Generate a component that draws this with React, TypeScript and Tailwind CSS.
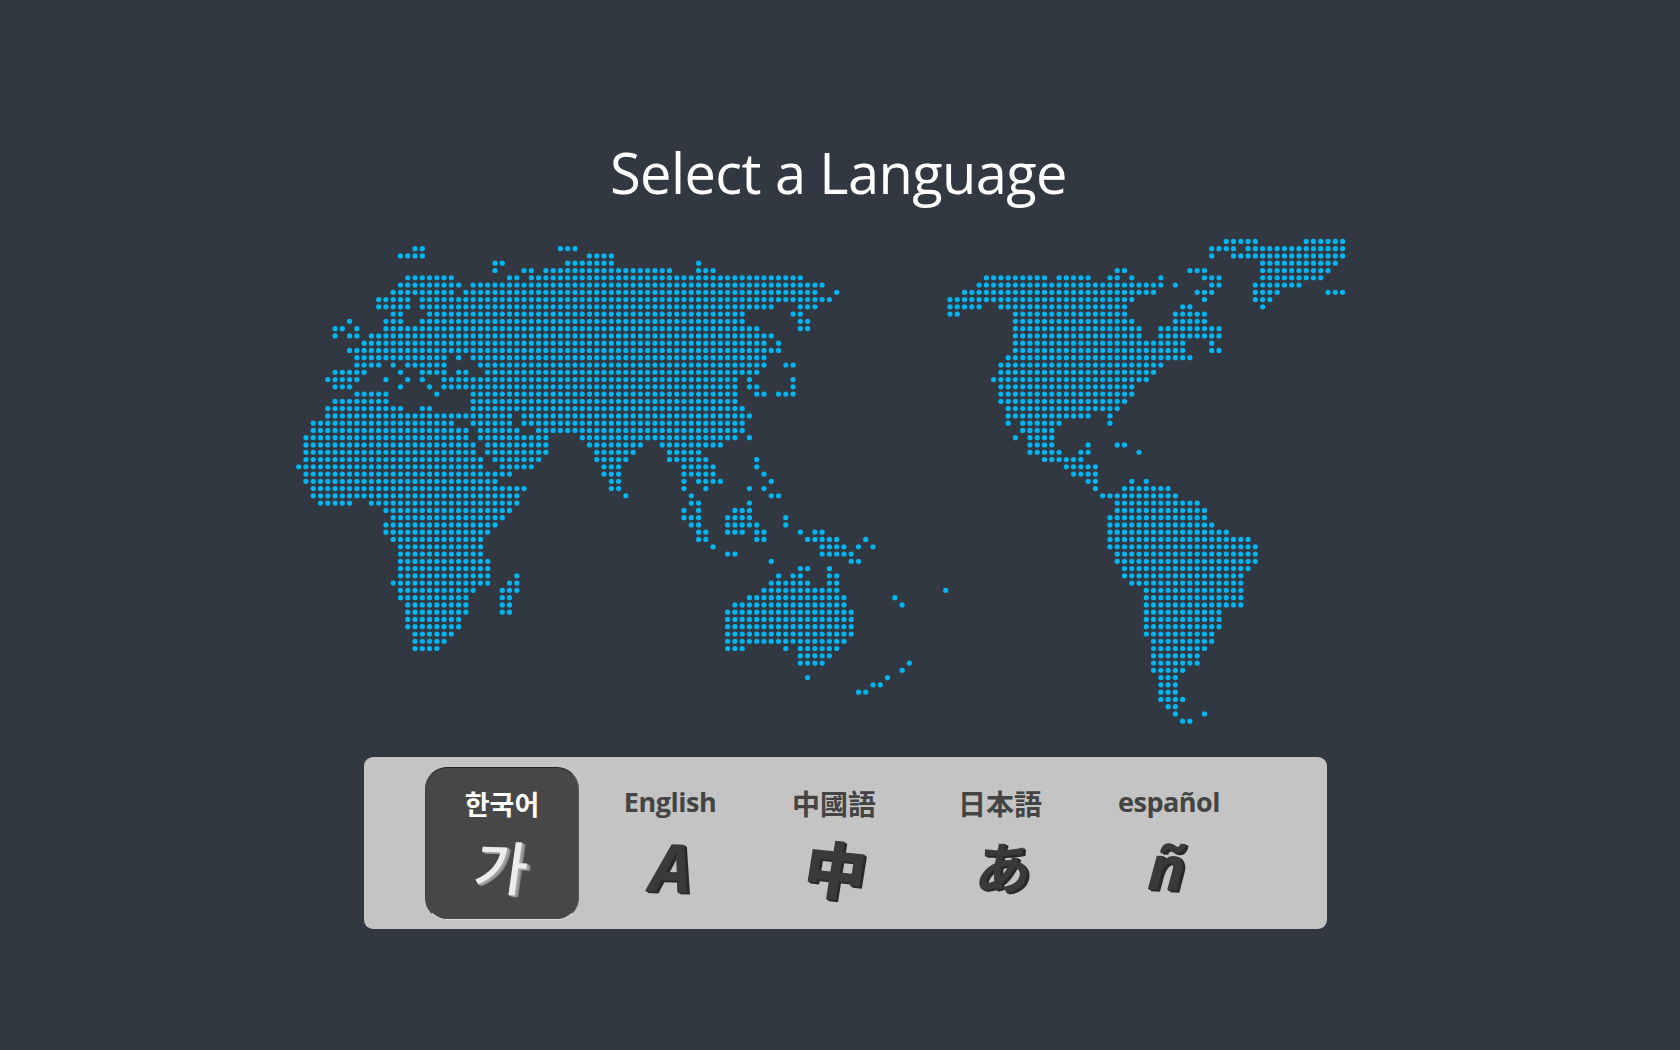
const oldWorld = [
  '',
  '16-17 36-38',
  '14-17 40-43',
  '27-28 37-43 55',
  '27 31-32 34-51 55-57',
  '15-21 29-30 32-69',
  '14-22 24-72',
  '13-21 23-71 74',
  '11-15 17-73',
  '11-15 17-65 69-71',
  '13-14 18-61 68-69',
  '7 12-14 17-61 69-70',
  '5-6 8 12-63 69-70',
  '5 7-8 10-65',
  '9-64 66',
  '7-66',
  '8-20 22 24-64',
  '8-11 13 15-20 25-64 67-68',
  '5-9 14 17-20 22-23 26-63',
  '4-8 12 15 17 20-60 62 68',
  '5-7 14 18 20-60 62-63 68',
  '8-12 19 24-60 63-64 66-68',
  '5-12 24-60',
  '4-14 17-18 24-61',
  '4-29 31-62',
  '2-21 24-29 31-61',
  '2-23 25-30 33-61',
  '1-23 25-34 39-60 62',
  '1-24 26-34 40-47 50-58',
  '1-24 26-34 41-46 51-55',
  '1-25 27-33 41-45 51-56 63',
  '0-25 28-32 42-44 53-57 63',
  '1-29 42-44 53-57 64',
  '1-27 43-44 53 55-58 65',
  '2-31 43-44 53 56 62 64',
  '2-30 45 54 65-66',
  '3-7 10-30 54-55 62',
  '12-29 53 55 60-62',
  '13-28 53-55 59-62 67',
  '12-27 54-55 59-63 67',
  '12-26 55-56 59-61 63-64 69 71-72',
  '13-25 55-56 63-64 70-74 78',
  '14-25 57 72-75 77 79',
  '14-25 59-60 72-76',
  '14-26 65 76-77',
  '14-26 69-70 73',
  '14-26 30 66 68-69 73-74',
  '13-26 29-30 65-70 73-74',
  '14-24 28-30 64-74 89',
  '14-23 28-29 62-75 82',
  '15-23 28-29 60-75 83',
  '15-23 28-29 59-76',
  '15-22 59-76',
  '15-22 59-76',
  '16-21 59-76',
  '16-20 59-75',
  '16-19 59-61 67 69-74',
  '69-73',
  '69-72 84',
  '83',
  '70 81',
  '79-80',
  '77-78',
];

const newWorld = [
  '38-42 49-54',
  '36-39 41-54',
  '36 39-54',
  '43-53',
  '23-24 33-35 43-52',
  '5-13 15-19 22-23 25 29 35-37 43-51',
  '4-29 31 36-37 42-48',
  '2-28 34-36 42-45 52-54',
  '0-25 35 42-44',
  '0-4 7-24 32-33 43',
  '0-1 9-24 31-35',
  '9-25 31-35',
  '9-26 29-37',
  '9-26 29-37',
  '9-32 36',
  '9-32 36-37',
  '8-33',
  '7-29',
  '7-28',
  '6-27',
  '7-25',
  '7-25',
  '7-24',
  '8-23',
  '8-19 22',
  '8 10-15 22',
  '10-14',
  '9 11-14',
  '11-14 19 23-24',
  '11-15 18-19 26',
  '13-18',
  '16-20',
  '17-20',
  '19-20 25 27',
  '20 24-30',
  '21-31',
  '23-34',
  '23-35',
  '22-35',
  '22-36',
  '22-38',
  '22-41',
  '22-42',
  '23-42',
  '23-42',
  '24-41',
  '24-40',
  '25-40',
  '27-40',
  '27-40',
  '27-40',
  '27-37',
  '27-37',
  '27-37',
  '27-36',
  '28-36',
  '28-35',
  '28-34',
  '28-34',
  '28-32',
  '29-31',
  '29-31',
  '29-31',
  '29-32',
  '30-31',
  '31 35',
  '32-33',
];

const PITCH = 7.27;
const ROW_START = 241.4;

const toDots = (rows: string[], startX: number) => {
  const dots: { x: number; y: number }[] = [];
  rows.forEach((row, r) => {
    row.split(' ').filter(Boolean).forEach((part) => {
      const [from, to] = part.split('-').map(Number);
      for (let c = from; c <= (to ?? from); c++) {
        dots.push({ x: startX + c * PITCH, y: ROW_START + r * PITCH });
      }
    });
  });
  return dots;
};

const dots = [...toDots(oldWorld, 298.7), ...toDots(newWorld, 950)];

const languages = [
  {
    label: '한국어',
    labelClass: "text-[27px] font-bold [font-family:'Noto_Sans_CJK_KR',sans-serif] translate-y-[2px]",
    glyph: '가',
    glyphClass:
      "text-[58px] font-medium text-[#ececec] [font-family:'Noto_Sans_CJK_KR',sans-serif] [text-shadow:1px_1px_0_#a8a8a8,2px_1px_0_#a0a0a0,3px_2px_0_#909090,4px_2px_0_#808080] -skew-x-6 rotate-2 translate-y-[1px]",
  },
  {
    label: 'English',
    labelClass: "text-[27px] font-bold [font-family:'Open_Sans',sans-serif] tracking-[-0.5px] translate-x-[2px] translate-y-[1px]",
    glyph: 'A',
    glyphClass:
      "text-[67px] font-bold italic text-[#3a3a3a] [font-family:'Open_Sans',sans-serif] [text-shadow:1px_1px_0_#2a2a2a,2px_1px_0_#2a2a2a,3px_2px_0_#2a2a2a] rotate-2 translate-x-[3px] translate-y-[3px]",
  },
  {
    label: '中國語',
    labelClass: "text-[28px] font-bold [font-family:'Noto_Sans_CJK_TC',sans-serif] translate-y-[2px]",
    glyph: '中',
    glyphClass:
      "text-[62px] font-black text-[#3a3a3a] [font-family:'Noto_Sans_CJK_TC',sans-serif] [text-shadow:1px_1px_0_#2a2a2a,2px_1px_0_#2a2a2a,3px_2px_0_#2a2a2a] rotate-6 -skew-x-3 translate-x-[2px] translate-y-[4px]",
  },
  {
    label: '日本語',
    labelClass: "text-[28px] font-bold [font-family:'Noto_Sans_CJK_JP',sans-serif] translate-y-[2px]",
    glyph: 'あ',
    glyphClass:
      "text-[56px] font-bold text-[#3a3a3a] [font-family:'Noto_Sans_CJK_JP',sans-serif] [text-shadow:1px_1px_0_#2a2a2a,2px_1px_0_#2a2a2a,3px_2px_0_#2a2a2a] -skew-x-6 translate-x-[4px] translate-y-[2px]",
  },
  {
    label: 'español',
    labelClass: "text-[27px] font-bold [font-family:'Open_Sans',sans-serif] tracking-[-0.5px] translate-x-[3px] translate-y-[1px]",
    glyph: 'ñ',
    glyphClass:
      "text-[62px] font-bold italic text-[#3a3a3a] [font-family:'Open_Sans',sans-serif] [text-shadow:1px_1px_0_#2a2a2a,2px_1px_0_#2a2a2a,3px_2px_0_#2a2a2a] rotate-3 translate-x-[1px] translate-y-[3px]",
  },
];

export default function App() {
  return (
    <div className="h-[1050px] w-[1680px] overflow-hidden bg-[#323841]">
      {/* Title */}
      <h1 className="pt-[136px] pr-[3px] text-center text-[56px] leading-[72px] tracking-[-0.6px] text-white [font-family:'Open_Sans',sans-serif]">
        Select a Language
      </h1>

      {/* Dot map */}
      <svg
        className="mt-[27px] ml-[290px] block"
        width={1060}
        height={500}
        viewBox="290 235 1060 500"
      >
        {dots.map((d, i) => (
          <circle key={i} cx={d.x} cy={d.y} r={2.6} fill="#00b5f1" />
        ))}
      </svg>

      {/* Language picker */}
      <div className="mt-[22px] ml-[364px] flex h-[172px] w-[963px] gap-[12px] rounded-[9px] bg-[#c4c4c4] pt-[10px] pl-[61px]">
        {languages.map((lang, i) => (
          <div
            key={lang.label}
            className={`flex h-[153px] w-[154px] flex-col items-center rounded-[22px] ${
              i === 0
                ? 'border border-t-[#222] border-r-[#5a5a5a] border-b-[#e0e0e0] border-l-[#444] bg-[#474747] text-white'
                : 'text-[#444444]'
            }`}
          >
            <span className={`mt-[16px] h-[36px] leading-[36px] ${lang.labelClass}`}>{lang.label}</span>
            <span className={`mt-[6px] block leading-[76px] ${lang.glyphClass}`}>{lang.glyph}</span>
          </div>
        ))}
      </div>
    </div>
  );
}
